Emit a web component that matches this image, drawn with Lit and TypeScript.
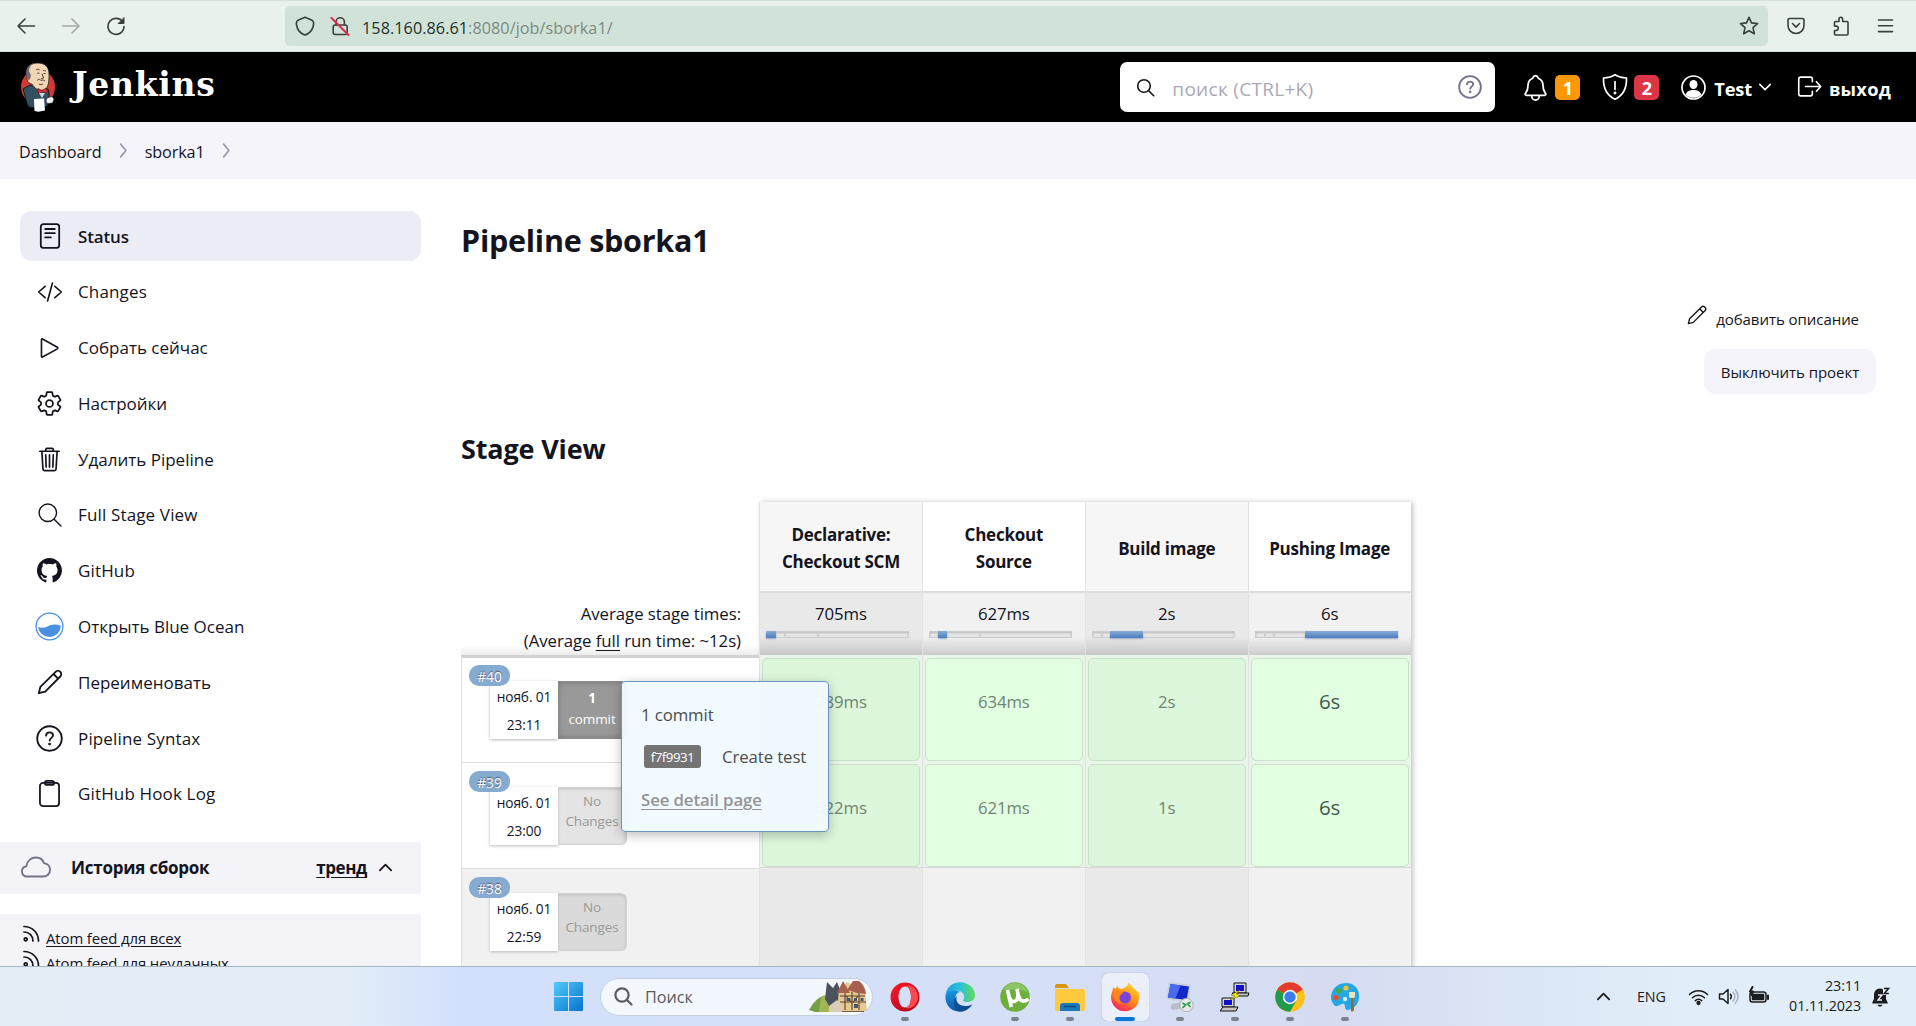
import { LitElement, html, css, svg, nothing } from "lit";
import { customElement } from "lit/decorators.js";
import { styleMap } from "lit/directives/style-map.js";
import { classMap } from "lit/directives/class-map.js";

const line = (size: number, body: unknown, w = 32, box = "0 0 512 512") => html`<svg
  width=${size} height=${size} viewBox=${box} fill="none" stroke="currentColor"
  stroke-width=${w} stroke-linecap="round" stroke-linejoin="round">${body}</svg>`;

const ic = {
  status: () => line(26, svg`<rect x="3.8" y="1.2" width="18.4" height="23.6" rx="2.6"/><path d="M8.2 6h9.6M8.2 10.2h9.6M8.2 14.4h5.6"/>`, 1.8, "0 0 26 26"),
  code: () => line(26, svg`<path d="M160 368L32 256l128-112M352 368l128-112-128-112M304 78l-96 356"/>`, 32),
  play: () => line(26, svg`<path d="M88 91v330c0 12 10 18 21 12l292-160c12-7 12-26 0-33L109 79c-11-6-21 0-21 12z"/>`, 32),
  gear: () => line(27, svg`<circle cx="256" cy="256" r="66"/><path d="M416.39 256a154.34 154.34 0 01-1.53 20.79l45.21 35.46a10.81 10.81 0 012.45 13.75l-42.77 74a10.81 10.81 0 01-13.14 4.59l-44.9-18.08a16.11 16.11 0 00-15.17 1.75A164.48 164.48 0 01325 400.8a15.94 15.94 0 00-8.82 12.14l-6.73 47.89a11.08 11.08 0 01-10.68 9.17h-85.54a11.11 11.11 0 01-10.69-8.87l-6.72-47.82a16.07 16.07 0 00-9-12.22 155.3 155.3 0 01-21.46-12.57 16 16 0 00-15.11-1.71l-44.89 18.07a10.81 10.81 0 01-13.14-4.58l-42.77-74a10.8 10.8 0 012.45-13.75l38.21-30a16.05 16.05 0 006-14.08c-.36-4.17-.58-8.33-.58-12.5s.21-8.27.58-12.35a16 16 0 00-6.07-13.94l-38.19-30A10.81 10.81 0 0149.48 186l42.77-74a10.81 10.81 0 0113.14-4.59l44.9 18.08a16.11 16.11 0 0015.17-1.75A164.48 164.48 0 01187 111.2a15.94 15.94 0 008.82-12.14l6.73-47.89A11.08 11.08 0 01213.23 42h85.54a11.11 11.11 0 0110.69 8.87l6.72 47.82a16.07 16.07 0 009 12.22 155.3 155.3 0 0121.46 12.57 16 16 0 0015.11 1.71l44.89-18.07a10.81 10.81 0 0113.14 4.58l42.77 74a10.8 10.8 0 01-2.45 13.75l-38.21 30a16.05 16.05 0 00-6.05 14.08c.33 4.14.55 8.3.55 12.47z"/>`, 33),
  trash: () => line(27, svg`<path d="M112 112l20 330c1 14 12 24 28 24h192c16 0 27-10 28-24l20-330M74 100h364M186 100V62c0-10 8-18 18-18h104c10 0 18 8 18 18v38M256 170v230M184 170l8 230M328 170l-8 230"/>`, 32),
  search: () => line(26, svg`<circle cx="213" cy="213" r="172"/><path d="M338 338l134 134"/>`, 28),
  github: () => html`<svg width="25" height="25" viewBox="0 0 16 16" fill="currentColor"><path d="M8 0C3.58 0 0 3.58 0 8c0 3.54 2.29 6.53 5.47 7.59.4.07.55-.17.55-.38 0-.19-.01-.82-.01-1.49-2.01.37-2.53-.49-2.69-.94-.09-.23-.48-.94-.82-1.13-.28-.15-.68-.52-.01-.53.63-.01 1.08.58 1.23.82.72 1.21 1.87.87 2.33.66.07-.52.28-.87.51-1.07-1.78-.2-3.64-.89-3.64-3.95 0-.87.31-1.59.82-2.15-.08-.2-.36-1.02.08-2.12 0 0 .67-.21 2.2.82.64-.18 1.32-.27 2-.27s1.36.09 2 .27c1.53-1.04 2.2-.82 2.2-.82.44 1.1.16 1.92.08 2.12.51.56.82 1.27.82 2.15 0 3.07-1.87 3.75-3.65 3.95.29.25.54.73.54 1.48 0 1.07-.01 1.93-.01 2.2 0 .21.15.46.55.38A8.01 8.01 0 0 0 16 8c0-4.42-3.58-8-8-8z"/></svg>`,
  ocean: () => html`<svg width="29" height="29" viewBox="0 0 29 29"><circle cx="14.5" cy="14.5" r="13.4" fill="#fff" stroke="#4a90e2" stroke-width="1.3"/><path d="M3 15c3.500 1.200 6.500 1 9.500-.6s7-3.200 13.400-.6A11.500 11.500 0 0 1 3 15z" fill="#4a90e2"/></svg>`,
  pencil: (s = 26) => line(s, svg`<path d="M1.800 24.200l1.600-6.400L18.600 2.800a3.300 3.300 0 0 1 4.700 4.700L8.200 22.600zM16.500 5l4.600 4.700"/>`, 1.8, "0 0 26 26"),
  help: (s = 27, w = 1.8) => line(s, svg`<circle cx="13" cy="13" r="11.800"/><path d="M9.700 10.200c.1-2 1.500-3.100 3.400-3.100 2 0 3.300 1.200 3.300 2.900 0 2.300-3.200 2.500-3.200 5"/><circle cx="13.100" cy="18.400" r=".5" fill="currentColor"/>`, w, "0 0 26 26"),
  clip: () => line(27, svg`<rect x="3.800" y="2.800" width="18.400" height="22.300" rx="3"/><rect x="8.600" y=".9" width="8.800" height="3.800" rx="1.900"/>`, 1.7, "0 0 26 26"),
  chev: (d: string, s: number, w = 1.8) => line(s, svg`<path d=${d}/>`, w, "0 0 16 16"),
};
const RIGHT = "M5.300 2l5 6-5 6";
const DOWN = "M2 5l6 6 6-6";
const UP = "M2 11l6-6 6 6";

const butler = html`<svg width="36" height="50" viewBox="0 0 36 50">
  <ellipse cx="18" cy="25" rx="17" ry="17.500" fill="#d33833"/>
  <path d="M3 27l7-4 8 3 10 1c2 6 1 12-1 17l-10 2-8-1c-3-4-3-9-6-18z" fill="#335061" stroke="#0d1c24"/>
  <path d="M7 14c-2-7 3-13 10-13 8-.3 12 4 12 11 0 6 0 14-5 16-5 1.500-10-2-12-6-3 0-6-4-5-8z" fill="#f0d6b7" stroke="#2b1f18" stroke-width=".8"/>
  <path d="M7 15C4.500 8 8 2 14 1.300c-4 2-4.700 5-5 8l2 4-1 4-3 1z" fill="#6d6b6d"/>
  <path d="M16 8c1-1 2.600-1 3.600 0M23 9c1-.8 2-.7 2.800.1M17.200 11.200h2.200M23.500 11.500h2M22 12l1.600 4-2.400.6M17 18.500c2-2 3-1 4 0 1.500-1 3-.5 4 .8M19 22c1.500.9 3 .8 4-.2" fill="none" stroke="#3b2a20" stroke-width=".9"/>
  <path d="M18 26.500l4 2 4-2.500 1.300 5-5-1-4 2z" fill="#d33833" stroke="#7a1010" stroke-width=".6"/>
  <path d="M19 31l3 5 3-5z" fill="#c8d8e0"/>
  <path d="M14 37l10-.4 1 12-6.500 1.200-4-.8z" fill="#fff"/>
  <path d="M27 36l5-1.500 2 2.500-1.500 4-5 .5-1.500-2.500z" fill="#f7f2ee" stroke="#222" stroke-width=".6"/>
</svg>`;

@customElement("browser-bar")
class BrowserBar extends LitElement {
  static styles = css`
    :host { display: flex; align-items: center; height: 52px; box-sizing: border-box; background: #e9f1ec; border-top: 1px solid #d3e0d9; border-bottom: 1px solid #cfdbd4; padding: 0 20px 0 16px; color: #39413d; }
    .nav { display: flex; gap: 25px; width: 269px; }
    .off { color: #a3aaa6; }
    .url { flex: 1; height: 40px; border-radius: 5px; background: #d1e3d9; display: flex; align-items: center; padding: 0 9px 0 10px; box-sizing: border-box; font: 16.200px/40px "Open Sans", sans-serif; letter-spacing: .06px; color: #7c8a83; }
    .url b { font-weight: 400; color: #25302a; }
    .txt { padding-top: 3px; }
    .lock { margin: 0 12px 0 15px; }
    .star { margin-left: auto; }
    .tools { display: flex; gap: 25px; margin-left: 18px; }
    svg { display: block; }
  `;
  render() {
    const g = (b: unknown, w = 1.6) => line(20, b, w, "0 0 20 20");
    return html`
      <div class="nav">
        ${g(svg`<path d="M18.500 10H2M9 3l-7 7 7 7"/>`)}
        <span class="off">${g(svg`<path d="M1.500 10H18M11 3l7 7-7 7"/>`)}</span>
        ${g(svg`<path d="M17 6.500A8 8 0 1 0 18 10.500"/><path d="M18 2v5.500h-5.500z" fill="currentColor" stroke-width="1"/>`)}
      </div>
      <div class="url">
        ${line(20, svg`<path d="M10 1.200l7 3c1.800.8 1.900 4 .8 7.400C16.600 15 13 18.800 10 18.800S3.400 15 2.200 11.600C1.100 8.200 1.200 5 3 4.200z" stroke="#39413d"/>`, 1.7, "0 0 20 20")}
        <span class="lock">${line(20, svg`<g stroke="#39413d"><rect x="3.200" y="9" width="14" height="9.500" rx="2"/><path d="M6 9V6a4.200 4.200 0 0 1 8.400 0v3"/></g><path d="M1.500 2l17 17" stroke="#e2284f" stroke-width="2"/>`, 1.6, "0 0 20 20")}</span>
        <span class="txt"><b>158.160.86.61</b>:8080/job/sborka1/</span>
        <span class="star">${g(svg`<path stroke="#39413d" d="M10 1.300l2.500 5.600 6 .7-4.500 4.100 1.300 6.100L10 14.800l-5.300 3 1.300-6.100L1.500 7.600l6-.7z"/>`, 1.6)}</span>
      </div>
      <div class="tools">
        ${g(svg`<path d="M3.500 2.500h13A1.500 1.500 0 0 1 18 4v5.500a8 8 0 0 1-16 0V4a1.500 1.500 0 0 1 1.500-1.500z"/><path d="M6.500 7.500l3.500 3.600 3.500-3.600"/>`)}
        ${g(svg`<path d="M8 5V3a1.800 1.800 0 0 1 3.600 0v2.500H16a1 1 0 0 1 1 1V18a1 1 0 0 1-1 1H4.500a1 1 0 0 1-1-1v-3.500H5a2.200 2.200 0 0 0 0-4.400H3.500V6.500a1 1 0 0 1 1-1H8z"/>`)}
        ${g(svg`<path d="M2.500 4h14M2.500 9.800h14M2.500 15.600h14"/>`)}
      </div>`;
  }
}

@customElement("page-header")
class PageHeader extends LitElement {
  static styles = css`
    :host { display: flex; align-items: center; height: 70px; background: #000; color: #fff; box-sizing: border-box; padding: 0 25px 0 20px; font-family: "Open Sans", sans-serif; }
    svg { display: block; }
    .name { font: bold 33px/40px "DejaVu Serif", serif; margin: -4px 0 0 16px; letter-spacing: .700px; }
    .search { margin-left: auto; width: 375px; height: 50px; box-sizing: border-box; background: #fff; border-radius: 7px; display: flex; align-items: center; color: #14141f; padding: 0 13px 0 16px; font-size: 19px; }
    .search .ph { color: #a9a9b6; margin: 3px auto 0 17px; letter-spacing: .3px; }
    .search .q { color: #73738c; }
    .grp { display: flex; align-items: center; }
    .alerts { margin-left: 27px; gap: 6px; }
    .shield { margin-left: 21px; gap: 5px; }
    .badge { width: 25px; height: 25px; border-radius: 5px; background: #ff9800; font: 700 18px/27px "Open Sans", sans-serif; text-align: center; }
    .red { background: #dc3545; }
    .user { margin-left: 22px; }
    .exit { margin-left: 24px; }
    .t { font-weight: 700; font-size: 18.300px; line-height: 24px; padding-top: 3px; }
    .user .t { margin: 0 6px 0 8px; letter-spacing: -.2px; }
    .exit .t { margin-left: 7px; letter-spacing: .2px; }
  `;
  render() {
    return html`
      ${butler}<span class="name">Jenkins</span>
      <div class="search">
        ${line(19, svg`<circle cx="8" cy="8" r="6.300"/><path d="M12.700 12.700l5 5"/>`, 1.6, "0 0 19 19")}
        <span class="ph">поиск (CTRL+K)</span><span class="q">${ic.help(24, 2)}</span>
      </div>
      <div class="grp alerts">
        ${line(27, svg`<path d="M427.680 351.430C402 320 383.870 304 383.870 217.350 383.870 138 343.350 109.730 310 96c-4.430-1.820-8.600-6-9.950-10.550C294.200 65.540 277.800 48 256 48s-38.210 17.550-44 37.470c-1.350 4.600-5.520 8.710-9.950 10.530-33.390 13.750-73.870 41.920-73.870 121.350C128.130 304 110 320 84.320 351.430 73.680 364.450 83 384 101.610 384h308.880c18.510 0 27.770-19.610 17.190-32.570zM320 384v16a64 64 0 01-128 0v-16"/>`, 30, "26 20 460 460")}
        <span class="badge">1</span>
      </div>
      <div class="grp shield">
        ${line(28, svg`<path d="M14 1.800c3.500 2.300 7 3 11.500 3.200C25.800 15 22 22.500 14 26.300 6 22.500 2.200 15 2.500 5 7 4.800 10.500 4.100 14 1.800zM14 8.500v8"/><circle cx="14" cy="20" r=".6" fill="currentColor"/>`, 1.7, "0 0 28 28")}
        <span class="badge red">2</span>
      </div>
      <div class="grp user">
        <svg width="25" height="25" viewBox="0 0 25 25"><circle cx="12.500" cy="12.500" r="11.500" fill="none" stroke="#fff" stroke-width="1.700"/><ellipse cx="12.500" cy="9.500" rx="4" ry="4.600" fill="#fff"/><path d="M4.600 19.500c1.500-3.500 4.500-4.500 7.900-4.500s6.400 1 7.900 4.500a11 11 0 0 1-15.800 0z" fill="#fff"/></svg>
        <span class="t">Test</span>${ic.chev(DOWN, 14, 1.8)}
      </div>
      <div class="grp exit">
        ${line(26, svg`<path d="M322 340v50a40 40 0 01-40 40H94a40 40 0 01-40-40V102a40 40 0 0140-40h188c22 0 40 18 40 40v50M402 340l84-94-84-94M186 246h294"/>`, 32)}
        <span class="t">выход</span>
      </div>`;
  }
}

@customElement("side-panel")
class SidePanel extends LitElement {
  static styles = css`
    :host { display: block; width: 421px; flex: none; color: #14141f; font: 17px/24px "Open Sans", sans-serif; padding-top: 32px; box-sizing: border-box; }
    svg { display: block; }
    .task { display: flex; align-items: center; height: 50px; margin: 0 0 5.800px 20px; border-radius: 12px; padding-left: 15px; letter-spacing: 0; }
    .task > b { font-weight: inherit; padding-top: 1px; }
    .task.on { background: #ececf5; font-weight: 600; letter-spacing: -.15px; }
    .task.latin { letter-spacing: .15px; }
    .i { width: 29px; display: flex; justify-content: center; margin-right: 14px; }
    .hist { margin-top: 23px; height: 52px; background: #f3f3f8; display: flex; align-items: center; padding: 0 28px 0 21px; font-weight: 700; letter-spacing: -.25px; }
    .cloud { color: #73738c; margin-right: 20px; }
    .trend { margin-left: auto; text-decoration: underline; text-underline-offset: 3px; margin-right: 11px; letter-spacing: -.4px; }
    .feeds { margin-top: 20px; background: #f3f3f8; height: 100px; padding: 11px 0 0 22px; box-sizing: border-box; font-size: 14.900px; line-height: 25px; letter-spacing: -.1px; }
    .feed { display: flex; gap: 6px; }
    .feed u { padding-top: 1px; height: 24px; text-underline-offset: 2px; }
  `;
  render() {
    const tasks: [unknown, string][] = [
      [ic.status(), "Status"], [ic.code(), "Changes"], [ic.play(), "Собрать сейчас"], [ic.gear(), "Настройки"],
      [ic.trash(), "Удалить Pipeline"], [ic.search(), "Full Stage View"], [ic.github(), "GitHub"],
      [ic.ocean(), "Открыть Blue Ocean"], [ic.pencil(), "Переименовать"], [ic.help(), "Pipeline Syntax"], [ic.clip(), "GitHub Hook Log"],
    ];
    const rss = line(18, svg`<path d="M2 1.500c8.500 0 14.500 6.500 14.500 14.500M2 7c5.500 0 9 4 9 9"/><circle cx="3.700" cy="14.300" r="1.500"/>`, 1.7, "0 0 18 18");
    return html`
      ${tasks.map(([i, t], n) => html`<div class=${classMap({ task: true, on: n === 0, latin: n > 0 && /^[ -~]+$/.test(t) })}><span class="i">${i}</span><b>${t}</b></div>`)}
      <div class="hist">
        <span class="cloud">${line(30, svg`<path d="M92 226C103 126 180 76 256 76c70 0 118 42 134 96 60 8 106 52 106 114 0 70-54 116-120 116H116C61 402 16 380 16 315c0-54 36-83 76-89z"/>`, 32)}</span>
        История сборок<span class="trend">тренд</span>${ic.chev(UP, 15, 1.9)}
      </div>
      <div class="feeds">
        ${["Atom feed для всех", "Atom feed для неудачных"].map((t) => html`<div class="feed">${rss}<u>${t}</u></div>`)}
      </div>`;
  }
}

interface Stage { name: string; avg: string; from: number; to: number; ticks: number[]; cells: string[]; }
const stages: Stage[] = [
  { name: "Declarative: Checkout SCM", avg: "705ms", from: 0, to: 10, ticks: [17, 50], cells: ["789ms", "622ms"] },
  { name: "Checkout Source", avg: "627ms", from: 9, to: 18, ticks: [49], cells: ["634ms", "621ms"] },
  { name: "Build image", avg: "2s", from: 18, to: 51, ticks: [8], cells: ["2s", "1s"] },
  { name: "Pushing Image", avg: "6s", from: 50, to: 143, ticks: [8, 17], cells: ["6s", "6s"] },
];
const runs = [
  { id: "#40", time: "23:11", commit: true },
  { id: "#39", time: "23:00", commit: false },
  { id: "#38", time: "22:59", commit: false },
];

@customElement("stage-view")
class StageView extends LitElement {
  static styles = css`
    :host { display: flex; position: relative; color: #14141f; font: 16.800px/27px "Open Sans", sans-serif; width: 951px; letter-spacing: -.1px; }
    .left { width: 298px; }
    .avg { height: 153px; box-sizing: border-box; padding: 98px 18px 0 0; text-align: right; letter-spacing: -.05px; background: linear-gradient(#fff 94%, #ececec); }
    .avg u { text-underline-offset: 3px; }
    .run { position: relative; height: 106px; box-sizing: border-box; border-top: 1px solid #dedede; border-left: 1px solid #dedede; padding: 24px 0 0 28px; display: flex; background: #fff; }
    .run.first { border-top: 3px solid #d2d2d2; padding-top: 23px; height: 107px; }
    .run.idle { background: #f1f1f1; }
    .num { position: absolute; left: 7px; top: 8px; width: 41px; height: 21px; border-radius: 10px; background: #86abd1; color: #fff; font-size: 13.800px; line-height: 23px; text-align: center; text-shadow: 0 -1px 1px #557; }
    .first .num { top: 7px; }
    .date { width: 68px; height: 58px; box-sizing: border-box; background: #fff; box-shadow: 0 1px 3px #bbb; font-size: 13.700px; line-height: 28px; padding-top: 2px; text-align: center; }
    .chg { width: 69px; height: 58px; box-sizing: border-box; border-radius: 0 6px 6px 0; background: #e4e4e4; color: #999; font-size: 13.500px; line-height: 19.500px; text-align: center; padding-top: 4px; border: 1px solid #d3d3d3; border-left: 0; box-shadow: inset 0 1px 3px #bbb; }
    .idle .chg { background: #dadada; }
    .chg.c { background: #999; color: #fff; border-color: #8b8b8b; padding-top: 6px; line-height: 21px; box-shadow: inset 0 0 6px #777; }
    .grid { display: grid; grid-template-columns: repeat(4, 162.900px); margin-right: -1px; box-shadow: 2px 0 5px #c4c4c4; }
    .col { display: flex; flex-direction: column; background: #f1f1f1; border-left: 1px solid #e2e2e2; box-sizing: border-box; }
    .col:nth-child(odd) { background: #e9e9e9; }
    .head { height: 91px; box-sizing: border-box; display: flex; align-items: center; justify-content: center; text-align: center; font-weight: 700; font-size: 17px; letter-spacing: -.25px; padding: 3px 14px 0; background: #fff; border-bottom: 2px solid #ddd; }
    .head span { max-width: 128px; }
    .col:nth-child(odd) .head { background: #f6f6f6; }
    .time { height: 62px; box-sizing: border-box; padding: 7px 6px 0; text-align: center; background: linear-gradient(transparent 70%, #0003 110%); }
    .bar { position: relative; width: 143px; height: 7px; box-sizing: border-box; border: 1px solid #ccc; background: #e6e6e6; margin-top: 4px; box-shadow: inset 0 1px 2px #bbb; }
    .fill { position: absolute; top: -1px; height: 7px; background: linear-gradient(#8aacd4, #4a7dc0); box-shadow: 0 1px 2px #9ab; }
    .tick { position: absolute; top: 0; width: 2px; height: 5px; background: #cfcfcf; }
    .ok { height: 106px; box-sizing: border-box; background: #e9f5e9; padding: 3px 2px 1px; }
    .ok div { height: 103px; box-sizing: border-box; border: 1px solid #cbe0cb; border-radius: 5px; background: #e2ffe2; color: #6f8670; line-height: 85px; text-align: center; }
    .col:nth-child(odd) .ok div { background: #ddf7dd; }
    .col:last-child .ok div { color: #435b48; font-size: 20.500px; }
    .rest { border-top: 1px solid #dadada; flex: 1; }
    .pop { position: absolute; left: 160px; top: 179px; width: 208px; height: 151px; box-sizing: border-box; border: 1px solid #6a94c2; border-radius: 4px; background: #f0faffF4; box-shadow: 0 3px 12px #0004; padding: 19px 0 0 19px; color: #4c4c4c; white-space: nowrap; }
    .row { display: flex; align-items: center; margin: 15px 0 16px 3px; height: 27px; }
    .sha { width: 57px; height: 23px; border-radius: 3px; background: #747474; color: #fff; font-size: 13.300px; line-height: 24px; text-align: center; margin-right: 21px; letter-spacing: -.5px; }
    .det { color: #949494; text-decoration: underline; text-underline-offset: 3px; font-weight: 600; }
  `;
  render() {
    return html`
      <div class="left">
        <div class="avg">Average stage times:<br />(Average <u>full</u> run time: ~12s)</div>
        ${runs.map((r, i) => html`<div class=${classMap({ run: true, first: i === 0, idle: i === 2 })}>
          <div class="date">нояб. 01<br />${r.time}</div>
          ${r.commit ? html`<div class="chg c"><b>1</b><br />commit</div>` : html`<div class="chg">No<br />Changes</div>`}
          <div class="num">${r.id}</div>
        </div>`)}
      </div>
      <div class="grid">
        ${stages.map((s) => html`<div class="col">
          <div class="head"><span>${s.name}</span></div>
          <div class="time">${s.avg}
            <div class="bar">
              ${s.ticks.map((t) => html`<i class="tick" style=${styleMap({ left: `${t}px` })}></i>`)}
              <i class="fill" style=${styleMap({ left: `${s.from - 1}px`, width: `${s.to - s.from}px` })}></i>
            </div>
          </div>
          ${s.cells.map((c) => html`<div class="ok"><div>${c}</div></div>`)}
          <div class="rest"></div>
        </div>`)}
      </div>
      <div class="pop"><span>1 commit</span>
        <div class="row"><span class="sha">f7f9931</span>Create test</div>
        <span class="det">See detail page</span>
      </div>`;
  }
}

const app = (b: unknown) => html`<svg width="30" height="30" viewBox="0 0 30 30">${b}</svg>`;
const apps: { icon: unknown; dot: string }[] = [
  { dot: "dot", icon: app(svg`<defs><linearGradient id="op" x1="0" x2="1" y1="0" y2="1"><stop offset="0" stop-color="#ff1b2d"/><stop offset="1" stop-color="#a70014"/></linearGradient></defs><path fill-rule="evenodd" fill="url(#op)" d="M15 .5a14.500 14.500 0 1 0 0 29 14.500 14.500 0 1 0 0-29zM15 4.500c4 0 6 5 6 10.500s-2 10.500-6 10.500S8.500 20.500 8.500 15 11 4.500 15 4.500z"/><path d="M15 4.500c4 0 6 5 6 10.500s-2 10.500-6 10.500c5 3 13-2 13-10.500S20 1.500 15 4.500z" fill="#fa4a50"/>`) },
  { dot: "", icon: app(svg`<defs><linearGradient id="e1" x1="0" x2="1"><stop offset="0" stop-color="#1b9de2"/><stop offset=".5" stop-color="#2cc3d5"/><stop offset="1" stop-color="#62db55"/></linearGradient><linearGradient id="e2" y1="0" y2="1" x1="0" x2="0"><stop offset="0" stop-color="#1596e0"/><stop offset="1" stop-color="#0c59a4"/></linearGradient></defs><path d="M.5 14C1 6 7 .3 15 .3 24 .3 30 7 30 13c0 5-4 7-8 7-3 0-4.500-1-3.500-2.500C20 15 19 9 12 8.500 6 8 2 10 .5 14z" fill="url(#e1)"/><path d="M.4 14C2 9 9 6.500 15 10c-5 1-6 7-3 11 3 4 9 5 14.500 2.200C23 28 18 30 13.500 29.500 5 29 0 22 .4 14z" fill="url(#e2)"/><path d="M12 14c-3 7 5 13 15.500 8.500C23 28.500 18 30 14 29.500 8 27 7 18 12 14z" fill="#0d4f92"/>`) },
  { dot: "dot", icon: app(svg`<circle cx="15" cy="15" r="14.800" fill="#6caf3b"/><path d="M3 8C8-2 24-1 28 10c-8-3-17-3-25-2z" fill="#8cc763"/><path d="M7.500 8l3.800 17M7.500 8c1.200 7 2.500 12 6.500 11.500 4.500-.5 4.500-7 3-12.500M17 7c1 6 2 11 5.500 12 2 .5 4-.2 6-2" fill="none" stroke="#fff" stroke-width="3.600"/>`) },
  { dot: "dot", icon: app(svg`<path d="M0 4a2 2 0 0 1 2-2h9l3 4H0z" fill="#d9960c"/><path d="M0 7h28a2 2 0 0 1 2 2v18a2 2 0 0 1-2 2H2a2 2 0 0 1-2-2z" fill="#ffca3e"/><path d="M5 29v-5a3 3 0 0 1 3-3h14a3 3 0 0 1 3 3v5z" fill="#1979bd"/><path d="M9 24.500h12" stroke="#0b4b82" stroke-width="1.600"/>`) },
  { dot: "wide", icon: app(svg`<defs><linearGradient id="ff" x1=".8" x2=".2" y1="0" y2="1"><stop offset="0" stop-color="#ffe22e"/><stop offset=".5" stop-color="#ff8a16"/><stop offset="1" stop-color="#f5156c"/></linearGradient></defs><path d="M19 0c1 4 5 5 7.500 9 1 1 1.500 1 1.500 0 2 4 1.500 11-2 15.500-5 6-15 6.500-20.500 1C.5 21 0 14 2.500 9c0-2 1-3.500 1.500-4 .2 1 .6 1.600 1 2L8 4c0 2 1 3 3 3 3-1 6-1.500 8-7z" fill="url(#ff)"/><circle cx="15" cy="15.500" r="6" fill="#7a45d8"/><path d="M3.500 11c3-3 7-2 10-.5-1 2-3.500 2-4 4.500-.2 3 1 5.500 4 6.500-5 2-11-3-10-10.500z" fill="#ff8a1a" opacity=".85"/>`) },
  { dot: "dot", icon: app(svg`<path d="M4 0l22 3-3 17L1 17z" fill="#c9cfd9"/><path d="M5.500 2l18.500 2.500L21.500 18 3 15.500z" fill="#1228c8"/><path d="M5.500 2l10 1.400-5 13-7.500-.9z" fill="#4a6cf0"/><path d="M7 22l10-2 3 6-11 2c-4 0-4-4-2-6z" fill="#b9bec8"/><circle cx="21.500" cy="23" r="6.700" fill="#e6e9e8" stroke="#999" stroke-width=".7"/><path d="M17.500 21l3 2-3 3M25.500 20l-3 2 3 3" fill="none" stroke="#25a244" stroke-width="1.700"/>`) },
  { dot: "dot", icon: app(svg`<g stroke="#111" stroke-width="1"><path d="M14 1h12v10H14z" fill="#d8d8d8"/><path d="M12 11l3 3h13l1-3z" fill="#c5c5c5"/><path d="M2 16h12v9H2z" fill="#d8d8d8"/><path d="M0 29l3-4h15l-2 4z" fill="#c5c5c5"/></g><path d="M16 3h8v6h-8zM4 18h8v5H4z" fill="#1010d0"/><path d="M20 8l-9 5 4 1-5 4 10-4-4-2z" fill="#ffee00" stroke="#665500" stroke-width=".5"/>`) },
  { dot: "dot", icon: app(svg`<circle cx="15" cy="15" r="14.800" fill="#fbc116"/><path d="M15 15L2.200 7.600a14.800 14.800 0 0 1 25.600 0z" fill="#e33b2e"/><path d="M2.200 7.600A14.800 14.800 0 0 0 15 29.800l6.400-11z" fill="#229a4b"/><path d="M2.200 7.600h25.600H15z" fill="#e33b2e"/><circle cx="15" cy="15" r="7.200" fill="#fff"/><circle cx="15" cy="15" r="5.700" fill="#3a7df0"/>`) },
  { dot: "dot", icon: app(svg`<path d="M16 1C25 1 30 8 29 16c-1 8-7 12-12 12-3-1-1-4-3-6s-5 3-9 2C1 20 0 15 2 10 5 4 10 1 16 1z" fill="#24a7e6"/><circle cx="9" cy="9" r="2.800" fill="#43ae35"/><circle cx="16" cy="6" r="2.600" fill="#f4c42c"/><circle cx="6" cy="15.500" r="2.700" fill="#e8502c"/><circle cx="15" cy="17" r="2.200" fill="#d9ecf8"/><path d="M19 10h6v5l-3 2-3-2z" fill="#f0e0c0"/><path d="M21 16h2.500l.5 12c-1 2-3 2-3 0z" fill="#a4662d"/>`) },
];

@customElement("task-bar")
class TaskBar extends LitElement {
  static styles = css`
    :host { display: flex; align-items: center; height: 60px; box-sizing: border-box; border-top: 1px solid #a7b4c6; padding: 0 26px 0 554px; background: linear-gradient(90deg, #e2edf6 0, #e2edf8 18%, #d3e0fb 24%, #d5e0f7 50%, #d5dcf2 70%, #dbe5f5 78%, #e1edf8 88%); font: 14.300px/20px "Open Sans", sans-serif; color: #1c1c1c; }
    svg { display: block; }
    .find { width: 273px; height: 38px; border-radius: 20px; background: #f3f7fe; border: 1px solid #c3cfe2; box-sizing: border-box; margin: 0 4.500px 0 17px; display: flex; align-items: center; padding: 0 5px 0 13px; font-size: 16.200px; color: #5b5b5b; }
    .find span { margin: 0 auto 0 12px; }
    .app { width: 55px; height: 48px; display: flex; flex-direction: column; align-items: center; }
    .app.act { width: 47px; margin: 0 4px; border-radius: 6px; background: #ebeff9; box-shadow: 0 0 1px #8898b0; }
    .app svg { margin-top: 9px; }
    .dot, .wide { width: 8px; height: 4px; border-radius: 2px; background: #7c828e; margin-top: 5px; }
    .wide { width: 20px; background: #0a78d4; }
    .tray { margin-left: auto; display: flex; align-items: center; }
    .eng { margin: 0 22px 0 26px; }
    .ics { display: flex; gap: 9px; }
    .clock { text-align: right; width: 92px; margin: -2px 11px 0 0; letter-spacing: -.1px; }
  `;
  render() {
    const t = (b: unknown) => line(21, b, 1.5, "0 0 21 21");
    return html`
      <svg width="29" height="29" viewBox="0 0 29 29"><defs><linearGradient id="w" x1="0" y1="0" x2="1" y2="1" ><stop offset="0" stop-color="#52cbfa"/><stop offset="1" stop-color="#0571cf"/></linearGradient></defs><path d="M1 0h13v14H0V1a1 1 0 0 1 1-1zM15 0h13a1 1 0 0 1 1 1v13H15zM0 15h14v14H1a1 1 0 0 1-1-1zM15 15h14v13a1 1 0 0 1-1 1H15z" fill="url(#w)"/></svg>
      <div class="find">
        ${line(19, svg`<circle cx="8" cy="8" r="6.600"/><path d="M13 13l4.500 4.500"/>`, 2.2, "0 0 19 19")}
        <span>Поиск</span>
        <svg width="58" height="32" viewBox="0 0 58 32"><path d="M0 29c4-7 8-12 14-14l8 6 4 10H6z" fill="#76a046"/><path d="M12 16c5-4 8-1 10 4l3 11H10z" fill="#a0b654"/><path d="M16 18l2-17 6 6 4-6 4 10-1 20-8-1z" fill="#4c535c"/><path d="M22 24h33v7H20z" fill="#6f5b44"/><path d="M30 9l8-8 18 9 2 20H28z" fill="#e6c98f"/><path d="M28 12L34 0l7 12zM38 9l6-9h6q6 4 7 13l-9-1z" fill="#a5604e"/><path d="M31 15h25M31 21h26M36 12v17M43 11v18M50 12v17M37 15l5 6M44 21l5-6" stroke="#5b4030" stroke-width="1.100"/><path d="M37.500 17h4v3h-4zM45 17h3v3h-3zM45 23h4v4h-4zM51.500 17h3v3h-3z" fill="#47546a"/><path d="M20 25l8-6 5 5v7H20z" fill="#d9cdb8"/></svg>
      </div>
      ${apps.map((a) => html`<div class=${classMap({ app: true, act: a.dot === "wide" })}>${a.icon}${a.dot ? html`<i class=${a.dot}></i>` : nothing}</div>`)}
      <div class="tray">
        ${ic.chev(UP, 15, 1.9)}<span class="eng">ENG</span>
        <div class="ics">
          ${t(svg`<path d="M1.500 8.500a12.500 12.500 0 0 1 18 0M4.500 11.800a8.500 8.500 0 0 1 12 0M7.300 14.600a4.500 4.500 0 0 1 6.400 0"/><circle cx="10.500" cy="17" r="1.400" fill="currentColor"/>`)}
          ${t(svg`<path d="M1.500 8h3.500l5-4.500v14L5 13H1.500zM12.500 8.300c1 1.300 1 3 0 4.400"/><path d="M15 6c2.500 2.500 2.500 6.500 0 9M17.300 3.800c3.600 3.800 3.600 9.600 0 13.400" stroke="#a9b2bd"/>`)}
          ${t(svg`<rect x="2" y="6" width="16" height="10" rx="2.500"/><rect x="4.500" y="8.500" width="11" height="5" fill="currentColor"/><path d="M20 9.500V13M4.500 1L2 5.500h3L3.500 9" stroke-width="2"/>`)}
        </div>
        <div class="clock">23:11<br />01.11.2023</div>
        <svg width="18" height="20" viewBox="0 0 18 20"><path d="M8 1.500c-4 0-6 3-6 6.500v4L.3 15.500v1h15.400v-1L14 12V5L10 1.800zM5.500 17.800h5c-.5 2.400-4.500 2.400-5 0z" fill="#1c1c1c"/><path d="M6 8h4l-4 5h4" fill="none" stroke="#e6eef8" stroke-width="1.400"/><path d="M11 0h7v8h-7z" fill="#e1edf8"/><path d="M12 1.500h4.500L12.300 6.500h4.500" fill="none" stroke="#1c1c1c" stroke-width="1.500"/></svg>
      </div>`;
  }
}

@customElement("app-root")
class AppRoot extends LitElement {
  static styles = css`
    :host { display: flex; flex-direction: column; width: 1916px; height: 1026px; overflow: hidden; background: #fff; color: #14141f; font-family: "Open Sans", sans-serif; }
    svg { display: block; }
    .view { height: 914px; overflow: hidden; }
    .crumbs { height: 57px; background: #f4f4fa; display: flex; align-items: center; padding: 2px 0 0 19px; box-sizing: border-box; font-size: 16.200px; letter-spacing: -.1px; }
    .crumbs i { color: #9a9aae; margin: 0 13px 2px 13px; }
    .body { display: flex; }
    .main { width: 1415px; padding: 41px 0 0 40px; position: relative; }
    h1 { font-size: 30.500px; line-height: 40px; margin: 0; letter-spacing: -.25px; }
    h2 { font-size: 27px; line-height: 36px; margin: 37px 0 35px; letter-spacing: -.15px; }
    .acts { display: flex; flex-direction: column; align-items: flex-end; font-size: 15px; letter-spacing: -.05px; margin-top: 42px; }
    .desc { display: flex; height: 47px; margin-right: 17px; gap: 9px; line-height: 34px; }
    .desc svg { margin-top: 3px; }
    .off { width: 172px; height: 45px; border-radius: 12px; background: #f4f4fa; line-height: 46px; text-align: center; }
  `;
  render() {
    return html`
      <browser-bar></browser-bar>
      <div class="view">
        <page-header></page-header>
        <div class="crumbs">Dashboard<i>${ic.chev(RIGHT, 17, 1.6)}</i>sborka1<i>${ic.chev(RIGHT, 17, 1.6)}</i></div>
        <div class="body">
          <side-panel></side-panel>
          <div class="main">
            <h1>Pipeline sborka1</h1>
            <div class="acts">
              <div class="desc">${ic.pencil(20)}<span>добавить описание</span></div>
              <div class="off">Выключить проект</div>
            </div>
            <h2>Stage View</h2>
            <stage-view></stage-view>
          </div>
        </div>
      </div>
      <task-bar></task-bar>`;
  }
}
